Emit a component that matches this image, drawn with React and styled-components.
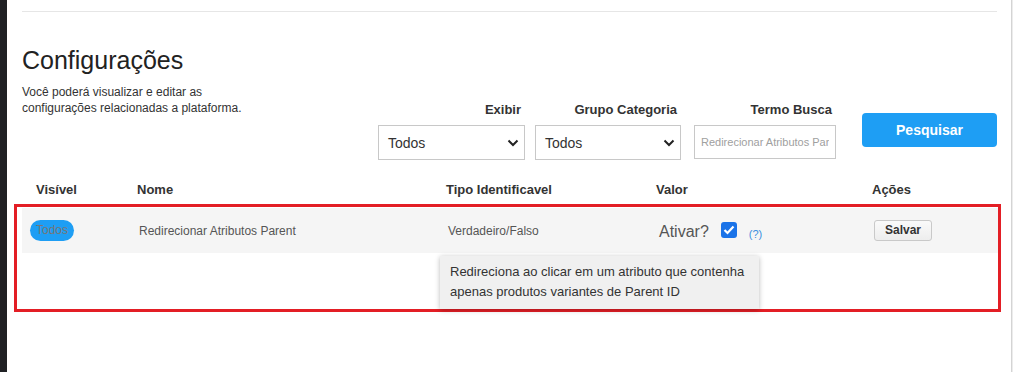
import React from "react";
import styled, { createGlobalStyle } from "styled-components";

const Global = createGlobalStyle`
  html, body { margin: 0; padding: 0; background: #fff; }
  body { font-family: "Liberation Sans", Arial, sans-serif; color: #333; }
  * { box-sizing: border-box; }
`;

const Shell = styled.div`
  display: flex;
  width: 1015px;
  height: 372px;
  overflow: hidden;
`;

const SideStrip = styled.div`
  width: 7px;
  flex: none;
  background: #202124;
`;

const Main = styled.main`
  flex: 1;
  padding: 11px 14px 0 15px;
  display: flex;
  flex-direction: column;
`;

const ScrollEdge = styled.div`
  width: 4px;
  flex: none;
  border-left: 1px solid #d4d4d4;
  box-shadow: inset 1px 0 0 #ececec;
`;

const Rule = styled.hr`
  margin: 0;
  border: 0;
  border-top: 1px solid #e6e6e6;
`;

const Title = styled.h1`
  margin: 34px 0 0;
  font-size: 25px;
  line-height: 28px;
  font-weight: 400;
  color: #222;
`;

const Toolbar = styled.div`
  display: flex;
  align-items: flex-start;
  margin-top: 10px;
`;

const Description = styled.p`
  flex: 1;
  margin: 0;
  font-size: 12px;
  line-height: 16px;
  color: #333;
`;

const Filters = styled.div`
  display: flex;
  margin-top: 18px;
`;

const Field = styled.label`
  display: flex;
  flex-direction: column;
  align-items: flex-end;
  width: ${(p) => p.$w}px;
  margin-left: ${(p) => p.$ml || 0}px;
`;

const FieldLabel = styled.span`
  font-size: 13px;
  line-height: 16px;
  font-weight: 700;
  color: #333;
  margin-right: 4px;
  margin-bottom: 7px;
`;

const SelectBox = styled.div`
  width: 100%;
  height: 35px;
  border: 1px solid #c8c8c8;
  background: #fff;
  display: flex;
  align-items: center;
  justify-content: space-between;
  padding: 0 5px 0 9px;
  font-size: 14px;
  color: #333;
`;

const TextInput = styled.input`
  width: 100%;
  height: 34px;
  border: 1px solid #c8c8c8;
  padding: 0 6px;
  font-family: "Liberation Sans", Arial, sans-serif;
  font-size: 11px;
  color: #333;
  outline: none;
  &::placeholder { color: #a0a0a0; }
`;

const SearchButton = styled.button`
  width: 135px;
  height: 34px;
  margin: 29px 0 0 26px;
  border: 0;
  border-radius: 4px;
  background: #1e9ef4;
  color: #fff;
  font-family: "Liberation Sans", Arial, sans-serif;
  font-size: 14px;
  font-weight: 700;
`;

const COLS = "107px 309px 210px 216px 1fr";

const HeadRow = styled.div`
  display: grid;
  grid-template-columns: ${COLS};
  margin-top: 22px;
  padding-bottom: 6px;
`;

const HeadCell = styled.div`
  font-size: 13px;
  line-height: 16px;
  font-weight: 700;
  color: #333;
  padding-left: ${(p) => p.$pl}px;
`;

const Highlight = styled.div`
  position: relative;
  margin: 0 -4px 0 -8px;
  border: 3px solid #e31e25;
  padding: 1px 0 56px 5px;
`;

const Row = styled.div`
  display: grid;
  grid-template-columns: ${COLS};
  align-items: center;
  height: 45px;
  background: #f5f5f5;
`;

const Cell = styled.div`
  padding-left: ${(p) => p.$pl}px;
  font-size: 12px;
  color: #555;
  display: flex;
  align-items: center;
`;

const Pill = styled.span`
  display: inline-flex;
  align-items: center;
  justify-content: center;
  width: 44px;
  height: 21px;
  border-radius: 11px;
  background: #1e9ef4;
  color: #777;
  font-size: 12px;
  margin-top: -1px;
`;

const AskLabel = styled.span`
  font-size: 16px;
  color: #555;
  margin-top: 2px;
`;

const Check = styled.span`
  width: 16px;
  height: 16px;
  border-radius: 3px;
  background: #1a73e8;
  margin-left: 12px;
  margin-top: -1px;
  display: inline-flex;
  align-items: center;
  justify-content: center;
`;

const Help = styled.span`
  margin-left: 12px;
  margin-top: 6px;
  font-size: 11px;
  color: #3b8fe0;
`;

const SaveButton = styled.button`
  height: 21px;
  padding: 0 10px;
  border: 1px solid #c9c9c9;
  border-radius: 3px;
  background: linear-gradient(#fafafa, #ededed);
  font-family: "Liberation Sans", Arial, sans-serif;
  font-size: 12px;
  font-weight: 700;
  color: #333;
  margin-top: -1px;
`;

const Tooltip = styled.div`
  position: absolute;
  left: 423px;
  top: 49px;
  width: 319px;
  height: 53px;
  padding: 6px 10px 0;
  background: #f0f0f0;
  box-shadow: 0 1px 5px rgba(0, 0, 0, 0.28);
  font-size: 13px;
  line-height: 20px;
  color: #333;
  z-index: 0;
`;

function Chevron() {
  return (
    <svg width="12" height="8" viewBox="0 0 12 8" aria-hidden="true">
      <path d="M1.5 1.5 L6 6 L10.5 1.5" fill="none" stroke="#222" strokeWidth="2" />
    </svg>
  );
}

function CheckMark() {
  return (
    <svg width="12" height="10" viewBox="0 0 12 10" aria-hidden="true">
      <path d="M1.5 5 L4.5 8 L10.5 1.5" fill="none" stroke="#fff" strokeWidth="2.2" />
    </svg>
  );
}

export default function App() {
  return (
    <>
      <Global />
      <Shell>
        <SideStrip />
        <Main>
          <Rule />
          <Title>Configurações</Title>
          <Toolbar>
            <Description>
              Você poderá visualizar e editar as
              <br />
              configurações relacionadas a plataforma.
            </Description>
            <Filters>
              <Field $w={147}>
                <FieldLabel>Exibir</FieldLabel>
                <SelectBox>
                  <span>Todos</span>
                  <Chevron />
                </SelectBox>
              </Field>
              <Field $w={146} $ml={10}>
                <FieldLabel>Grupo Categoria</FieldLabel>
                <SelectBox>
                  <span>Todos</span>
                  <Chevron />
                </SelectBox>
              </Field>
              <Field $w={142} $ml={13}>
                <FieldLabel>Termo Busca</FieldLabel>
                <TextInput placeholder="Redirecionar Atributos Parent" />
              </Field>
            </Filters>
            <SearchButton>Pesquisar</SearchButton>
          </Toolbar>
          <HeadRow>
            <HeadCell $pl={14}>Visível</HeadCell>
            <HeadCell $pl={8}>Nome</HeadCell>
            <HeadCell $pl={8}>Tipo Identificavel</HeadCell>
            <HeadCell $pl={8}>Valor</HeadCell>
            <HeadCell $pl={8}>Ações</HeadCell>
          </HeadRow>
          <Highlight>
            <Row>
              <Cell $pl={8}>
                <Pill>Todos</Pill>
              </Cell>
              <Cell $pl={10}>Redirecionar Atributos Parent</Cell>
              <Cell $pl={10}>Verdadeiro/Falso</Cell>
              <Cell $pl={11}>
                <AskLabel>Ativar?</AskLabel>
                <Check>
                  <CheckMark />
                </Check>
                <Help>(?)</Help>
              </Cell>
              <Cell $pl={10}>
                <SaveButton>Salvar</SaveButton>
              </Cell>
            </Row>
            <Tooltip>
              Redireciona ao clicar em um atributo que contenha apenas produtos
              variantes de Parent ID
            </Tooltip>
          </Highlight>
        </Main>
        <ScrollEdge />
      </Shell>
    </>
  );
}
